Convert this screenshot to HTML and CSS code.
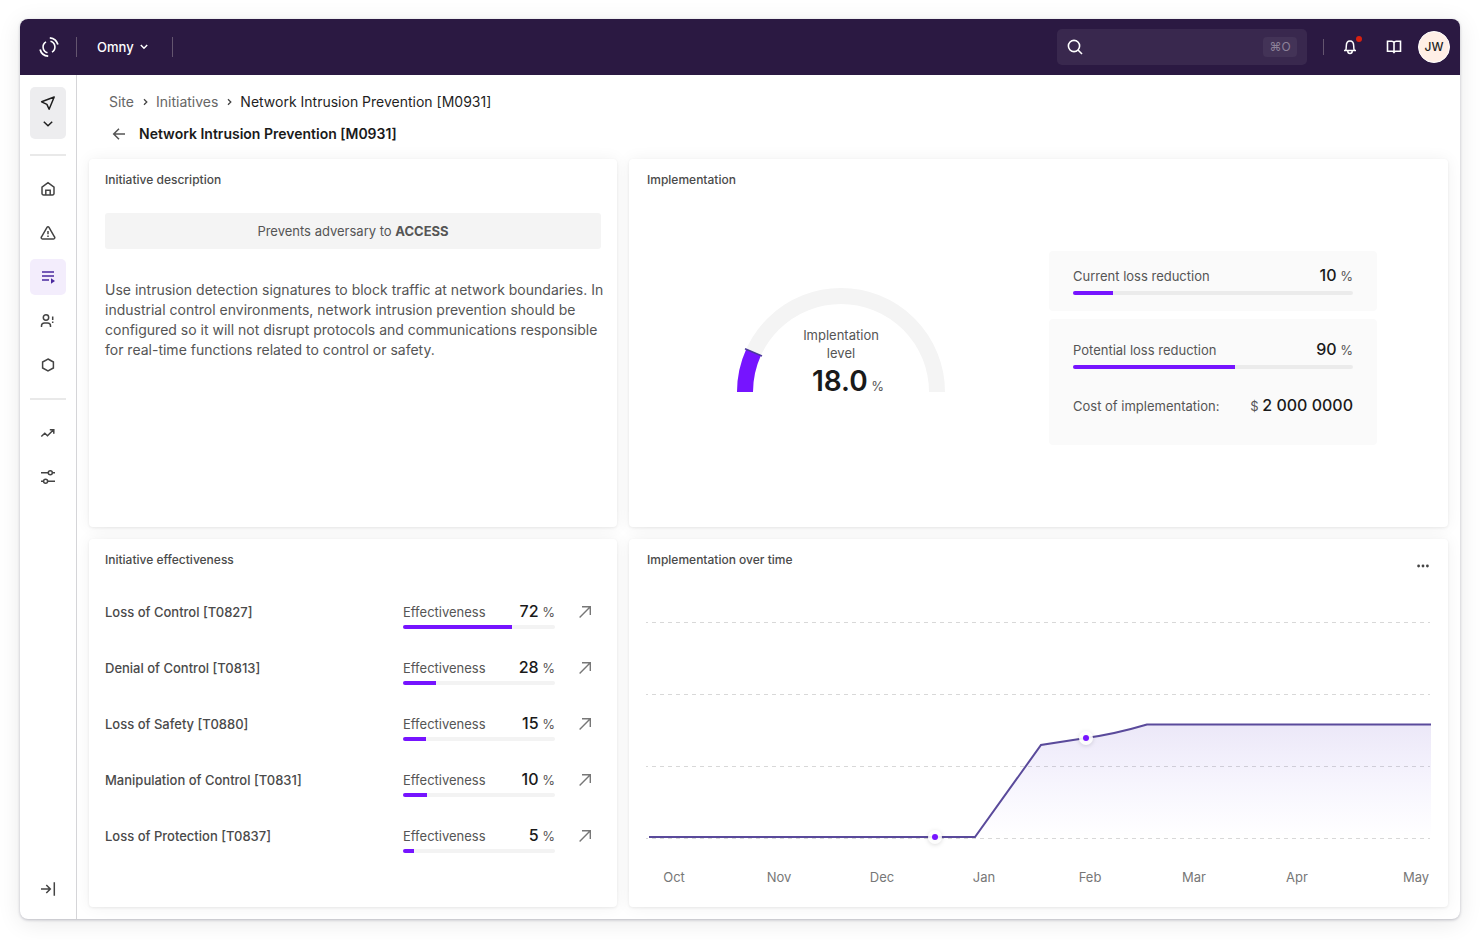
FILE: index.html
```
<!DOCTYPE html>
<html lang="en">

<head>
    <meta charset="UTF-8">
    <meta name="viewport" content="width=device-width, initial-scale=1.0">
    <title>Omny - Network Intrusion Prevention</title>
    <link rel="stylesheet" href="styles.css">
</head>

<body>
    <div class="app">
        <header class="topbar">
            <a class="logo" href="#" aria-label="Home">
                <svg width="22" height="22" viewBox="0 0 22 22" fill="none" stroke="#fff">
                    <path d="M12.500 5.300A5.900 5.900 0 0 1 14 16.100M9.500 16.700A5.900 5.900 0 0 1 8 5.900" stroke-width="1.600" />
                    <path d="M11.800 1.800A9.200 9.200 0 0 1 19.900 8.600M10.200 20.200A9.200 9.200 0 0 1 2.100 13.400" stroke-width="1.800" />
                </svg>
            </a>
            <span class="line"></span>
            <button class="site-btn">Omny
                <svg width="8" height="6" viewBox="0 0 8 6" fill="none" stroke="#fff" stroke-width="1.5"><path d="M.8 1L4 4.2L7.2 1" /></svg>
            </button>
            <span class="line"></span>
            <label class="search">
                <svg width="16" height="16" viewBox="0 0 16 16" fill="none" stroke="#fff" stroke-width="1.6"><circle cx="7" cy="7" r="5.6" /><path d="M11 11l4 4" /></svg>
                <input type="text" aria-label="Search">
                <kbd>⌘O</kbd>
            </label>
            <span class="line short"></span>
            <button class="icon-btn bell" aria-label="Notifications">
                <svg width="14" height="16" viewBox="0 0 14 16" fill="none" stroke="#fff" stroke-width="1.5"><path d="M1 11.500h12M2.500 11.500c.8-1.200.8-2.400.8-4.500C3.300 4 4.800 2 7 2s3.700 2 3.700 5c0 2.100 0 3.300.8 4.500M4.800 12v.3a2.200 2.200 0 0 0 4.400 0V12" /></svg>
                <span class="dot"></span>
            </button>
            <button class="icon-btn book" aria-label="Documentation">
                <svg width="16" height="16" viewBox="0 0 16 16" fill="none" stroke="#fff" stroke-width="1.6"><path d="M8 3.500C7.500 2.600 6.800 2.300 5.800 2.300H1.500v10h4.800c.8 0 1.300.3 1.700.9.400-.6.900-.9 1.700-.9h4.800v-10h-4.300C9.200 2.300 8.500 2.600 8 3.500zM8 3.500V14" /></svg>
            </button>
            <button class="avatar">JW</button>
        </header>
        <div class="body">
            <nav class="sidebar">
                <button class="nav-top" aria-label="Switch view">
                    <svg width="16" height="16" viewBox="0 0 16 16" fill="none" stroke="#1f1f1f" stroke-width="1.5" stroke-linejoin="round"><path d="M14.200 2L1.600 6.800l5.300 2.600 2.200 4.800z" /></svg>
                    <svg width="10" height="6" viewBox="0 0 10 6" fill="none" stroke="#1f1f1f" stroke-width="1.5"><path d="M.8.8L5 4.800L9.200.8" /></svg>
                </button>
                <hr>
                <a href="#" aria-label="Home"><svg viewBox="0 0 16 16"><path d="M2 6.200L8 1.700l6 4.500v6.300a1.500 1.500 0 0 1-1.500 1.500h-9A1.500 1.500 0 0 1 2 12.500zM5.800 14V9.300h4.400V14" /></svg></a>
                <a href="#" aria-label="Alerts"><svg viewBox="0 0 16 16"><path d="M7 2.300L1.400 12a1.200 1.200 0 0 0 1 1.900h11.200a1.200 1.200 0 0 0 1-1.900L9 2.300a1.150 1.150 0 0 0-2 0zM8 6v3.200M8 10.500V12" /></svg></a>
                <a href="#" class="active" aria-label="Initiatives"><svg viewBox="0 0 16 16"><path d="M2 3h12M2 7h12M2 11h7" /><path d="M11 9.200l4 2.800-4 2.800z" fill="#4b2a9e" stroke="none" /></svg></a>
                <a href="#" aria-label="People"><svg viewBox="0 0 16 16"><circle cx="6" cy="4.500" r="2.700" /><path d="M1.500 14v-1.200c0-1.900 1.300-2.900 3-2.900h3c1.700 0 3 1 3 2.900V14M12.700 3.500v3.600M12.700 8.500v1.500" /></svg></a>
                <a href="#" aria-label="Assets"><svg viewBox="0 0 16 16"><path d="M8 2l5.400 3v6L8 14l-5.400-3V5z" /></svg></a>
                <hr>
                <a href="#" aria-label="Trends"><svg viewBox="0 0 16 16"><path d="M1.300 11.500l3.500-3.300 2.700 2.600L13.300 5M9.800 4.800h4v4" /></svg></a>
                <a href="#" aria-label="Settings"><svg viewBox="0 0 16 16"><path d="M1 3.700h7.200M12.400 3.700H15M1 12.300h2.500M7.700 12.300H15" /><circle cx="10.300" cy="3.700" r="2" /><circle cx="5.600" cy="12.300" r="2" /></svg></a>
                <a href="#" class="expand" aria-label="Expand menu"><svg viewBox="0 0 16 16"><path d="M1 8h9M6.300 4l4 4-4 4M14.300 1.300v13.400" /></svg></a>
            </nav>
            <main>
                <div class="crumbs">
                    <a href="#">Site</a>
                    <svg width="5" height="8" viewBox="0 0 5 8"><path d="M1 1.200L3.800 4L1 6.800" /></svg>
                    <a href="#">Initiatives</a>
                    <svg width="5" height="8" viewBox="0 0 5 8"><path d="M1 1.200L3.800 4L1 6.800" /></svg>
                    <span>Network Intrusion Prevention [M0931]</span>
                </div>
                <div class="title">
                    <a href="#" aria-label="Back"><svg width="14" height="14" viewBox="0 0 14 14" fill="none" stroke="#555" stroke-width="1.5"><path d="M13 7H1.800M7 1.700L1.700 7L7 12.300" /></svg></a>
                    <h1>Network Intrusion Prevention [M0931]</h1>
                </div>
                <div class="cards">
                    <section class="card">
                        <h2>Initiative description</h2>
                        <div class="notice">Prevents adversary to <b>ACCESS</b></div>
                        <p class="desc">Use intrusion detection signatures to block traffic at network boundaries. In industrial control environments, network intrusion prevention should be configured so it will not disrupt protocols and communications responsible for real-time functions related to control or safety.</p>
                    </section>

                    <section class="card wide">
                        <h2>Implementation</h2>
                        <div class="impl">
                            <div class="gauge">
                                <svg width="208" height="104" viewBox="0 0 208 104" fill="none">
                                    <path d="M8 104A96 96 0 0 1 200 104" stroke="#f4f4f4" stroke-width="16" />
                                    <path d="M8 104A96 96 0 0 1 16.600 64.200" stroke="#7614ff" stroke-width="16" />
                                    <path d="M8 60.800L25 68" stroke="#4b3a9b" stroke-width="1.500" />
                                </svg>
                                <div class="gauge-text">
                                    <span>Implentation<br>level</span>
                                    <div><b>18.0</b> %</div>
                                </div>
                            </div>
                            <div class="stats">
                                <div class="box">
                                    <div class="row"><span>Current loss reduction</span><span><b>10</b> %</span></div>
                                    <div class="bar"><i style="width: 14.3%"></i></div>
                                </div>
                                <div class="box tall">
                                    <div class="row"><span>Potential loss reduction</span><span><b>90</b> %</span></div>
                                    <div class="bar"><i style="width: 58%"></i></div>
                                    <div class="row cost"><span>Cost of implementation:</span><span>$ <b>2 000 0000</b></span></div>
                                </div>
                            </div>
                        </div>
                    </section>

                    <section class="card">
                        <h2>Initiative effectiveness</h2>
                        <ul class="effects">
                            <li>
                                <span class="name">Loss of Control [T0827]</span>
                                <div class="metric">
                                    <div class="row"><span>Effectiveness</span><span><b>72</b> %</span></div>
                                    <div class="bar"><i style="width: 72%"></i></div>
                                </div>
                                <a href="#" aria-label="Open Loss of Control"><svg viewBox="0 0 12 12"><path d="M.6 11.400L11 1M3 .7h8.300V9" /></svg></a>
                            </li>
                            <li>
                                <span class="name">Denial of Control [T0813]</span>
                                <div class="metric">
                                    <div class="row"><span>Effectiveness</span><span><b>28</b> %</span></div>
                                    <div class="bar"><i style="width: 22%"></i></div>
                                </div>
                                <a href="#" aria-label="Open Denial of Control"><svg viewBox="0 0 12 12"><path d="M.6 11.400L11 1M3 .7h8.300V9" /></svg></a>
                            </li>
                            <li>
                                <span class="name">Loss of Safety [T0880]</span>
                                <div class="metric">
                                    <div class="row"><span>Effectiveness</span><span><b>15</b> %</span></div>
                                    <div class="bar"><i style="width: 15%"></i></div>
                                </div>
                                <a href="#" aria-label="Open Loss of Safety"><svg viewBox="0 0 12 12"><path d="M.6 11.400L11 1M3 .7h8.300V9" /></svg></a>
                            </li>
                            <li>
                                <span class="name">Manipulation of Control [T0831]</span>
                                <div class="metric">
                                    <div class="row"><span>Effectiveness</span><span><b>10</b> %</span></div>
                                    <div class="bar"><i style="width: 16%"></i></div>
                                </div>
                                <a href="#" aria-label="Open Manipulation of Control"><svg viewBox="0 0 12 12"><path d="M.6 11.400L11 1M3 .7h8.300V9" /></svg></a>
                            </li>
                            <li>
                                <span class="name">Loss of Protection [T0837]</span>
                                <div class="metric">
                                    <div class="row"><span>Effectiveness</span><span><b>5</b> %</span></div>
                                    <div class="bar"><i style="width: 7%"></i></div>
                                </div>
                                <a href="#" aria-label="Open Loss of Protection"><svg viewBox="0 0 12 12"><path d="M.6 11.400L11 1M3 .7h8.300V9" /></svg></a>
                            </li>
                        </ul>
                    </section>

                    <section class="card wide">
                        <div class="card-head">
                            <h2>Implementation over time</h2>
                            <button class="more" aria-label="More"><svg width="12" height="4" viewBox="0 0 12 4" fill="#444"><circle cx="1.600" cy="2" r="1.400" /><circle cx="6" cy="2" r="1.400" /><circle cx="10.400" cy="2" r="1.400" /></svg></button>
                        </div>
                        <svg class="chart" viewBox="0 0 786 280">
                            <defs>
                                <linearGradient id="area" x1="0" y1="0" x2="0" y2="1">
                                    <stop offset="0" stop-color="#5a3ac0" stop-opacity=".12" />
                                    <stop offset="1" stop-color="#7c5cff" stop-opacity="0" />
                                </linearGradient>
                            </defs>
                            <path class="grid" d="M1 16.500h784M1 88.500h784M1 160.500h784M1 232.500h784" />
                            <path d="M330 231L396 139L441 132Q470 128 502 118H786V232H330z" fill="url(#area)" />
                            <path class="curve" d="M4 231H330L396 139L441 132Q470 128 502 118.500H786" />
                            <g class="point">
                                <circle cx="290" cy="231" r="7" /><circle cx="290" cy="231" r="3" />
                                <circle cx="441" cy="132" r="7" /><circle cx="441" cy="132" r="3" />
                            </g>
                            <g class="months">
                                <text x="29" y="276">Oct</text>
                                <text x="134" y="276">Nov</text>
                                <text x="237" y="276">Dec</text>
                                <text x="339" y="276">Jan</text>
                                <text x="445" y="276">Feb</text>
                                <text x="549" y="276">Mar</text>
                                <text x="652" y="276">Apr</text>
                                <text x="771" y="276">May</text>
                            </g>
                        </svg>
                    </section>
                </div>
            </main>
        </div>
    </div>
</body>

</html>
```
FILE: styles.css
```
* {
    box-sizing: border-box;
    margin: 0;
    padding: 0;
}

body {
    padding: 19px 20px 21px;
    background: #fff;
    color: #555;
    font: 13px/20px Inter, "Liberation Sans", sans-serif;
}

button {
    border: 0;
    background: none;
    font: inherit;
    cursor: pointer;
}

a {
    color: inherit;
    text-decoration: none;
}

svg {
    display: block;
}

.app {
    display: flex;
    flex-direction: column;
    min-height: calc(100vh - 40px);
    border-radius: 8px;
    overflow: hidden;
    box-shadow: 0 1px 3px rgba(20, 20, 50, .25), 0 4px 24px rgba(0, 0, 0, .09);
}

/* top bar */
.topbar {
    display: flex;
    align-items: center;
    height: 56px;
    padding: 0 10px 0 18px;
    background: #2b1942;
    color: #fff;
}

.logo {
    margin-right: 16px;
}

.line {
    width: 1px;
    height: 20px;
    background: #64556f;
}

.line.short {
    height: 16px;
    margin: 0 12px 0 16px;
}

.site-btn {
    display: flex;
    align-items: center;
    gap: 6px;
    padding: 0 24px 0 20px;
    color: #fff;
    font-weight: 500;
}

.search {
    display: flex;
    align-items: center;
    width: 250px;
    height: 36px;
    margin-left: auto;
    padding: 0 10px;
    border-radius: 5px;
    background: #39284e;
}

.search input {
    flex: 1;
    min-width: 0;
    border: 0;
    outline: 0;
    background: none;
    color: #fff;
    font: inherit;
}

.search kbd {
    width: 34px;
    border-radius: 4px;
    background: #433357;
    color: #8d8299;
    font: 12px/20px Inter, "DejaVu Sans", sans-serif;
    text-align: center;
}

.icon-btn {
    position: relative;
    display: flex;
    align-items: center;
    justify-content: center;
    width: 28px;
    height: 28px;
}

.dot {
    position: absolute;
    top: 3px;
    right: 2px;
    width: 6px;
    height: 6px;
    border-radius: 50%;
    background: #d92010;
}

.book {
    margin: 0 10px 0 16px;
}

.avatar {
    width: 32px;
    height: 32px;
    border: 1px solid #fff;
    border-radius: 50%;
    background: #ffefe6;
    color: #1f1f1f;
    font-size: 12px;
    font-weight: 500;
}

/* side menu */
.body {
    display: flex;
    flex: 1;
}

.sidebar {
    display: flex;
    flex-direction: column;
    align-items: center;
    gap: 8px;
    width: 57px;
    padding: 12px 10px;
    border-right: 1px solid #d5d5d8;
}

.sidebar a,
.nav-top {
    display: flex;
    align-items: center;
    justify-content: center;
    width: 36px;
    height: 36px;
    border-radius: 5px;
}

.sidebar a svg {
    width: 16px;
    height: 16px;
    fill: none;
    stroke: #444;
    stroke-width: 1.5;
}

.sidebar .active {
    background: #f3edfc;
}

.sidebar .active svg {
    stroke: #4b2a9e;
}

.nav-top {
    flex-direction: column;
    gap: 10px;
    height: 52px;
    padding-bottom: 4px;
    background: #ededef;
}

.sidebar hr {
    width: 36px;
    height: 2px;
    margin: 7px 0;
    border: 0;
    background: #e9e9e9;
}

.sidebar .expand {
    margin-top: auto;
}

/* content */
main {
    display: flex;
    flex: 1;
    flex-direction: column;
    padding: 16px 12px 12px;
}

.crumbs {
    display: flex;
    align-items: center;
    gap: 8px;
    height: 22px;
    padding-left: 20px;
    color: #666;
    font-size: 14px;
}

.crumbs svg {
    margin-left: 1px;
    fill: none;
    stroke: #444;
    stroke-width: 1.3;
}

.crumbs span {
    color: #1f1f1f;
}

.title {
    display: flex;
    align-items: center;
    gap: 13px;
    height: 46px;
    padding: 0 0 4px 23px;
}

h1 {
    color: #1a1a1a;
    font-size: 14px;
    font-weight: 600;
}

.cards {
    display: grid;
    flex: 1;
    grid-template-columns: 528fr 819fr;
    grid-template-rows: 1fr 1fr;
    gap: 12px;
}

.card {
    display: flex;
    flex-direction: column;
    min-width: 0;
    padding: 12px 16px;
    border-radius: 4px;
    background: #fff;
    box-shadow: 0 1px 3px rgba(0, 0, 0, .07), 0 0 16px rgba(0, 0, 0, .06);
}

.card.wide {
    padding: 12px 18px;
}

h2 {
    color: #4a4a4a;
    font-size: 12px;
    font-weight: 500;
    line-height: 18px;
}

.notice {
    margin: 24px 0 31px;
    border-radius: 3px;
    background: #f4f4f4;
    line-height: 36px;
    text-align: center;
}

.desc {
    margin-right: -8px;
    font-size: 14px;
}

.row {
    display: flex;
    align-items: baseline;
    justify-content: space-between;
    height: 24px;
    line-height: 24px;
}

.row b {
    color: #1a1a1a;
    font-size: 16px;
    font-weight: 500;
}

.bar {
    height: 4px;
    border-radius: 2px;
    background: #ebebeb;
    overflow: hidden;
}

.bar i {
    display: block;
    height: 100%;
    background: #7614ff;
}

.impl {
    display: flex;
    flex: 1;
    align-items: center;
    gap: 104px;
    padding: 0 0 8px 90px;
}

.gauge {
    position: relative;
    width: 208px;
    height: 120px;
}

.gauge-text {
    position: absolute;
    top: 38px;
    left: 0;
    width: 100%;
    text-align: center;
}

.gauge-text span {
    display: block;
    line-height: 18px;
}

.gauge-text div {
    padding-left: 14px;
}

.gauge-text b {
    color: #1a1a1a;
    font-size: 28px;
    font-weight: 600;
    line-height: 38px;
}

.stats {
    display: grid;
    gap: 8px;
    width: 328px;
}

.box {
    padding: 12px 24px 16px;
    border-radius: 4px;
    background: #fafafa;
}

.box .bar {
    margin-top: 4px;
}

.box.tall {
    padding: 18px 24px 28px;
}

.cost {
    margin-top: 24px;
}

/* effectiveness list */
.effects {
    display: grid;
    gap: 26px;
    margin-top: 30px;
    list-style: none;
}

.effects li {
    display: flex;
    height: 30px;
}

.effects .name {
    flex: 1;
    color: #4a4a4a;
    font-weight: 500;
    line-height: 26px;
}

.metric {
    width: 152px;
}

.metric .bar {
    margin-top: 2px;
    background: #f3f3f3;
}

.effects a {
    margin: 7px 10px 0 24px;
}

.effects a svg {
    width: 12px;
    height: 12px;
    fill: none;
    stroke: #777;
    stroke-width: 1.4;
}

/* chart */
.card-head {
    display: flex;
    justify-content: space-between;
}

.more {
    padding: 12px 1px 0;
}

.chart {
    width: calc(100% + 3px);
    margin: 37px 0 0 -2px;
}

.grid {
    stroke: #d8d8d8;
    stroke-dasharray: 4 4;
    stroke-dashoffset: 2;
}

.curve {
    fill: none;
    stroke: #5a4a9b;
    stroke-width: 2;
}

.point circle:nth-child(odd) {
    fill: #fff;
    fill-opacity: .9;
    filter: drop-shadow(0 1px 2px rgba(0, 0, 0, .15));
}

.point circle:nth-child(even) {
    fill: #7614ff;
}

.months {
    fill: #777;
    font-size: 13px;
    text-anchor: middle;
}
```
